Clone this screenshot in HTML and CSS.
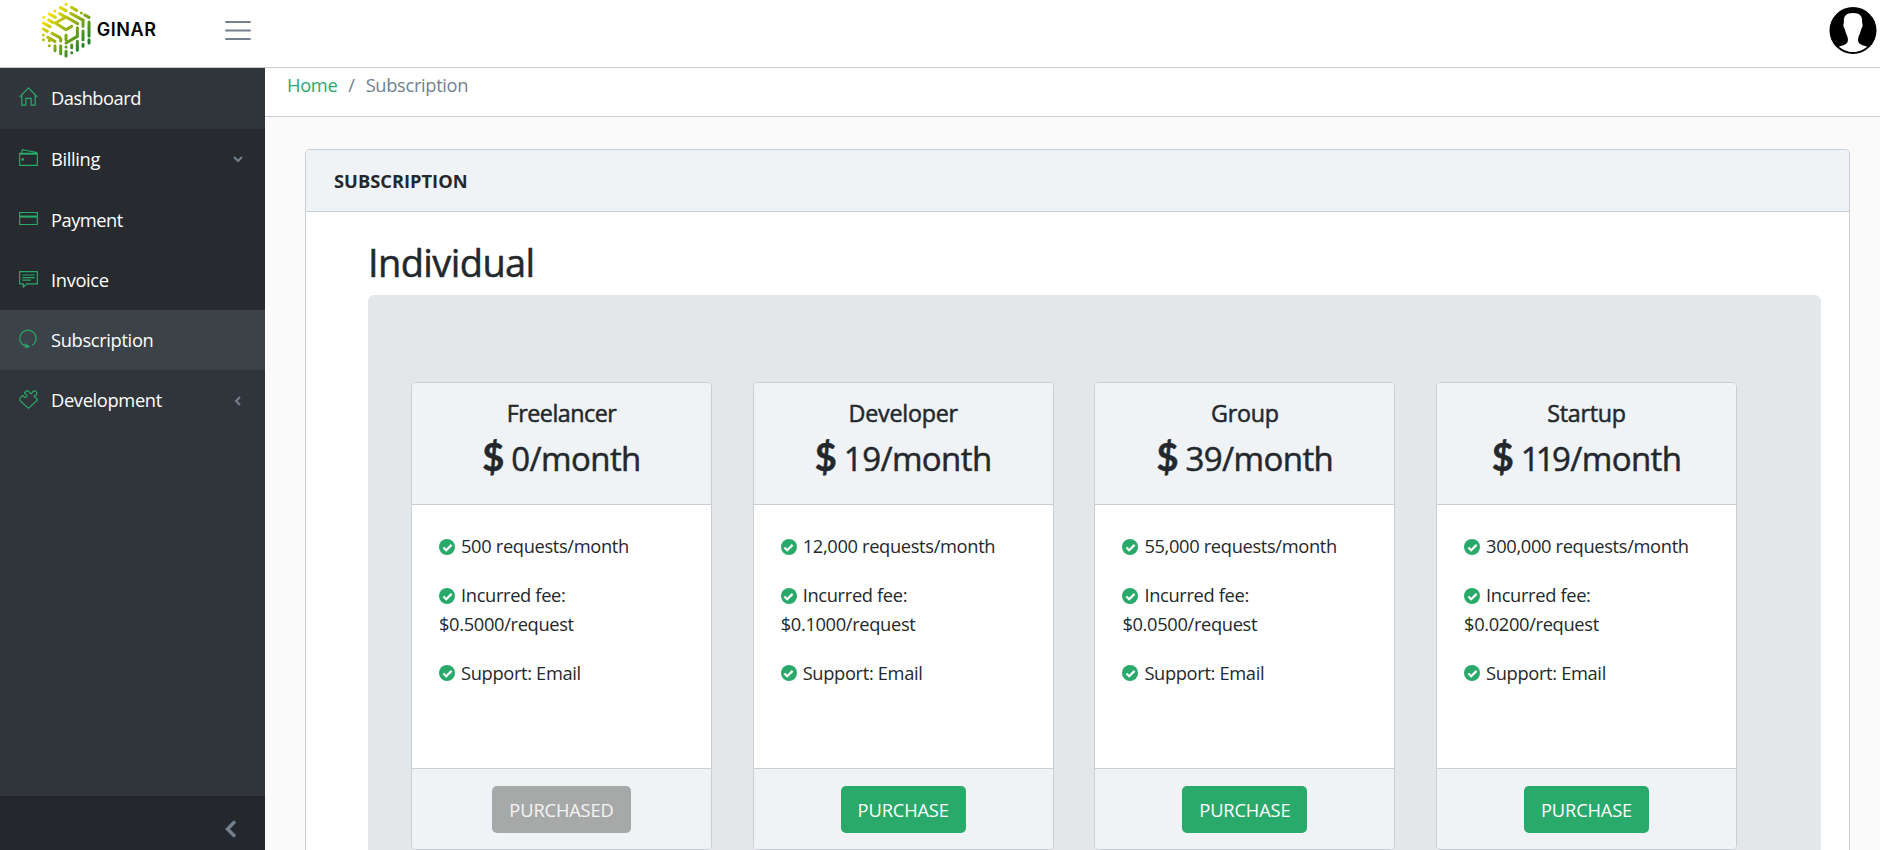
FILE: index.html
```html
<!DOCTYPE html>
<html lang="en">
<head>
<meta charset="utf-8">
<title>Ginar - Subscription</title>
<link rel="stylesheet" href="styles.css">
</head>
<body>
<header class="topbar">
  <a class="brand">
    <svg class="logo" viewBox="120 4 158 174" fill="none" stroke="url(#lg)" stroke-width="9" stroke-linecap="round">
      <defs><linearGradient id="lg" gradientUnits="userSpaceOnUse" x1="140" y1="40" x2="255" y2="150"><stop offset="0" stop-color="#ffe600"/><stop offset=".5" stop-color="#8fae12"/><stop offset="1" stop-color="#0d7a2c"/></linearGradient></defs>
      <path d="M198 14h.1M214 23l16 9M244 40h.1M254 46l13 7M181 24l17 9M212 41l38 21M164 34h.1M179 42l14 8M148 43l18 10M131 53h.1M146 61l12 7M130 70l20 11M130 88l12 7M156 101l24 13M130 106h.1M143 113l22 12M166 70l32-18 35 20M166 70l32 20 17-10M148 123h.1M148 138h.1M165 138v15M182 118v6M182 138v24M198 106v14M198 130l34-20V84M215 136v8M215 159h.1M232 125v27M249 66v14M249 94v26M249 134v6M267 67v42M267 120v10M198 142h.1M198 155v14M130 120h.1"/>
    </svg>
    <span class="brand-name">GINAR</span>
  </a>
  <svg class="burger" viewBox="0 0 26 20" stroke="#73818f" stroke-width="2" stroke-linecap="round"><path d="M1 2h24M1 10.400h24M1 19h24"/></svg>
  <svg class="avatar" viewBox="0 0 48 48"><circle cx="24" cy="24" r="24" fill="#000"/><path d="M24 6c-7 0-9.500 3-9.300 8.500.1 2-.6 2.500-.5 4.500.2 2.500 1.200 2.300 1.500 4 .7 4 2.500 6 3 9 .6 5-1 6.500-9.200 8.500C16 45 20 46 24 46s8.500-1 14.500-5.500c-8.200-2-9.800-3.500-9.200-8.500.5-3 2.300-5 3-9 .3-1.700 1.300-1.500 1.500-4 .1-2-.6-2.500-.5-4.500C33.500 9 31 6 24 6z" fill="#fff"/></svg>
</header>
<div class="shell">
  <nav class="sidebar">
    <a class="item"><svg class="ico" viewBox="0 0 20 20"><path d="M.8 10.500L10 1l9.200 9.500M3 8.500V19h4.200v-7h5.600v7H17V8.500"/></svg><span class="tight">Dashboard</span></a>
    <div class="group">
      <a class="item"><svg class="ico" viewBox="0 0 20 20"><path d="M.7 5.700h18.600v12.600H.7zM2.800 5.500L3.500 1.700l15 3v1M.7 6.500h18.600"/><circle cx="4" cy="12" r=".8"/></svg>Billing<svg class="caret" viewBox="0 0 10 10"><path d="M1 3l4 4 4-4"/></svg></a>
      <a class="item"><svg class="ico" viewBox="0 0 20 20"><path d="M.7 3.700h18.600v12.600H.7z"/><path d="M.7 8h18.600" stroke-width="2.200"/></svg><span class="tight">Payment</span></a>
      <a class="item"><svg class="ico" viewBox="0 0 20 20"><path d="M.7 2.700h18.600v13H8.200L4.500 19v-3.300H.7zM3.500 6.300h13M3.500 9h13M3.500 11.700h9"/></svg>Invoice</a>
    </div>
    <a class="item active"><svg class="ico" viewBox="0 0 20 20"><path d="M14 17a8.500 8.500 0 1 0-5 1.300M6 15.500l4.500 3-4 1.500"/></svg>Subscription</a>
    <a class="item"><svg class="ico" viewBox="0 0 20 20"><path d="M10 19.300L1 11V8.500L3.500 6c1.500-.5 1 1.800 2.800 1.800S9 6 8 4.800C7 3.800 5.500 4.500 6 3l1.500-2h2.300l2.700 3c1.500.3 1-2.700 3.200-3C18 .8 19.300 3 18.500 4.700c-.8 1.500-2.800 1-2.500 2.300l3 2v2z"/></svg>Development<svg class="caret" viewBox="0 0 10 10"><path d="M7 1L3 5l4 4"/></svg></a>
    <div class="minimizer"><svg viewBox="0 0 14 20"><path d="M11 2.500L3.500 10l7.500 7.500"/></svg></div>
  </nav>
  <main class="main">
    <div class="crumbs"><a class="home">Home</a><span class="sep">/</span>Subscription</div>
    <section class="card">
      <div class="card-head">SUBSCRIPTION</div>
      <div class="card-body">
        <h2>Individual</h2>
        <div class="plans">
          <article class="plan">
            <div class="plan-head"><h4 class="tight">Freelancer</h4><h3><b>$</b>0/month</h3></div>
            <div class="plan-body">
              <p><i class="tick"><svg viewBox="0 0 10 8"><path d="M1.300 4l2.500 2.500L8.700 1.600"/></svg></i>500 requests/month</p>
              <p><i class="tick"><svg viewBox="0 0 10 8"><path d="M1.300 4l2.500 2.500L8.700 1.600"/></svg></i>Incurred fee:<br>$0.5000/request</p>
              <p><i class="tick"><svg viewBox="0 0 10 8"><path d="M1.300 4l2.500 2.500L8.700 1.600"/></svg></i>Support: Email</p>
            </div>
            <div class="plan-foot"><a class="btn off">PURCHASED</a></div>
          </article>
          <article class="plan">
            <div class="plan-head"><h4>Developer</h4><h3><b>$</b>19/month</h3></div>
            <div class="plan-body">
              <p><i class="tick"><svg viewBox="0 0 10 8"><path d="M1.300 4l2.500 2.500L8.700 1.600"/></svg></i>12,000 requests/month</p>
              <p><i class="tick"><svg viewBox="0 0 10 8"><path d="M1.300 4l2.500 2.500L8.700 1.600"/></svg></i>Incurred fee:<br>$0.1000/request</p>
              <p><i class="tick"><svg viewBox="0 0 10 8"><path d="M1.300 4l2.500 2.500L8.700 1.600"/></svg></i>Support: Email</p>
            </div>
            <div class="plan-foot"><a class="btn">PURCHASE</a></div>
          </article>
          <article class="plan">
            <div class="plan-head"><h4>Group</h4><h3><b>$</b>39/month</h3></div>
            <div class="plan-body">
              <p><i class="tick"><svg viewBox="0 0 10 8"><path d="M1.300 4l2.500 2.500L8.700 1.600"/></svg></i>55,000 requests/month</p>
              <p><i class="tick"><svg viewBox="0 0 10 8"><path d="M1.300 4l2.500 2.500L8.700 1.600"/></svg></i>Incurred fee:<br>$0.0500/request</p>
              <p><i class="tick"><svg viewBox="0 0 10 8"><path d="M1.300 4l2.500 2.500L8.700 1.600"/></svg></i>Support: Email</p>
            </div>
            <div class="plan-foot"><a class="btn">PURCHASE</a></div>
          </article>
          <article class="plan">
            <div class="plan-head"><h4>Startup</h4><h3><b>$</b><span class="ones">11</span>9/month</h3></div>
            <div class="plan-body">
              <p><i class="tick"><svg viewBox="0 0 10 8"><path d="M1.300 4l2.500 2.500L8.700 1.600"/></svg></i>300,000 requests/month</p>
              <p><i class="tick"><svg viewBox="0 0 10 8"><path d="M1.300 4l2.500 2.500L8.700 1.600"/></svg></i>Incurred fee:<br>$0.0200/request</p>
              <p><i class="tick"><svg viewBox="0 0 10 8"><path d="M1.300 4l2.500 2.500L8.700 1.600"/></svg></i>Support: Email</p>
            </div>
            <div class="plan-foot"><a class="btn">PURCHASE</a></div>
          </article>
        </div>
      </div>
    </section>
  </main>
</div>
</body>
</html>
```
FILE: styles.css
```css
* { box-sizing: border-box; }
body { margin: 0; height: 850px; overflow: hidden; font: 18.300px/28.300px "Open Sans", "Noto Sans", sans-serif; letter-spacing: -.34px; color: #23282c; background: #fafafa; }
svg { display: block; flex: none; }
h2, h3, h4, p { margin: 0; font-weight: 400; }
h2, h3, h4 { -webkit-text-stroke: .5px currentColor; }
.topbar { display: flex; height: 68px; padding-bottom: 7px; align-items: center; background: #fff; border-bottom: 1px solid #c8ced3; }
.brand { display: flex; align-items: center; width: 225px; padding-left: 40px; }
.logo { width: 52.700px; height: 58px; }
.brand-name { margin-left: 4px; font: 600 18px/24px Inter, sans-serif; letter-spacing: .6px; color: #000; }
.burger { width: 26px; height: 20px; }
.avatar { width: 48px; height: 47px; margin-left: auto; margin-right: 3px; }
.shell { display: flex; height: 782px; }
.sidebar { display: flex; flex-direction: column; width: 265px; background: #2f353a; color: #fff; }
.item { display: flex; align-items: center; height: 60.300px; padding: 0 22px 0 19px; }
.ico { width: 19px; height: 19px; margin: -3px 13px 0 0; fill: none; stroke: #29a96a; stroke-width: 1.250; }
.tight { letter-spacing: -.5px; }
.group { background: #272b2f; margin-top: 1px; }
.active { background: #3b4248; }
.caret { width: 10px; height: 10px; margin-left: auto; fill: none; stroke: #73818f; stroke-width: 2; }
.minimizer { display: flex; align-items: center; justify-content: flex-end; margin-top: auto; height: 54px; padding: 12px 27px 0 0; background: #24282c; }
.minimizer svg { width: 14px; height: 20px; fill: none; stroke: #73818f; stroke-width: 3.400; }
.main { flex: 1; min-width: 0; height: 782px; overflow: hidden; }
.crumbs { display: flex; height: 49px; padding: 3px 22px; background: #fff; border-bottom: 1px solid #c8ced3; color: #73818f; }
.home { color: #29a96a; }
.sep { margin: 0 11px; }
.card { height: 702px; margin: 32px 30px 0 40px; border: 1px solid #c8ced3; border-bottom: 0; border-radius: 5px 5px 0 0; background: #fff; }
.card-head { height: 62px; padding: 17px 28px; background: #eff3f6; border-bottom: 1px solid #c8ced3; border-radius: 4px 4px 0 0; font-weight: 700; letter-spacing: 0; }
.card-body { padding: 28px 28px 0 62px; }
h2 { height: 55px; font-size: 38px; line-height: 45px; letter-spacing: -.6px; }
.plans { display: grid; grid-template-columns: repeat(4, 301px); column-gap: 40.700px; height: 555px; padding: 87px 43px 0; background: #e3e7ea; border-radius: 6px 6px 0 0; }
.plan { height: 468px; border: 1px solid #c8ced3; border-radius: 5px; background: #fff; }
.plan-head { height: 122px; padding-top: 16px; text-align: center; background: #eff3f6; border-bottom: 1px solid #c8ced3; border-radius: 4px 4px 0 0; }
h4 { font-size: 23.300px; line-height: 29px; letter-spacing: -.25px; }
h4.tight { letter-spacing: -.5px; }
h3 { margin-top: 11px; font-size: 33px; line-height: 40px; letter-spacing: -.6px; }
h3 b { margin-right: 7px; font: 700 38px/1px Lato, sans-serif; letter-spacing: 0; }
.ones { letter-spacing: -3.800px; margin-right: 1px; }
.plan-body { height: 263px; padding: 27px 27px 0; }
.plan-body p { margin-bottom: 21px; }
.tick { display: inline-block; overflow: hidden; width: 16px; height: 16px; margin-right: 6px; padding: 4px 2.500px; border-radius: 50%; background: #29a96a; vertical-align: -1.500px; }
.tick svg { width: 11px; height: 9px; fill: none; stroke: #fff; stroke-width: 2; }
.plan-foot { display: flex; justify-content: center; height: 81px; padding-top: 17px; background: #eff3f6; border-top: 1px solid #c8ced3; border-radius: 0 0 4px 4px; }
.btn { height: 47px; padding: 0 17px; line-height: 47px; border-radius: 5px; background: #29a96a; color: #fff; letter-spacing: -.15px; }
.off { background: #a7a9a8; color: #f4f5f6; }
```
